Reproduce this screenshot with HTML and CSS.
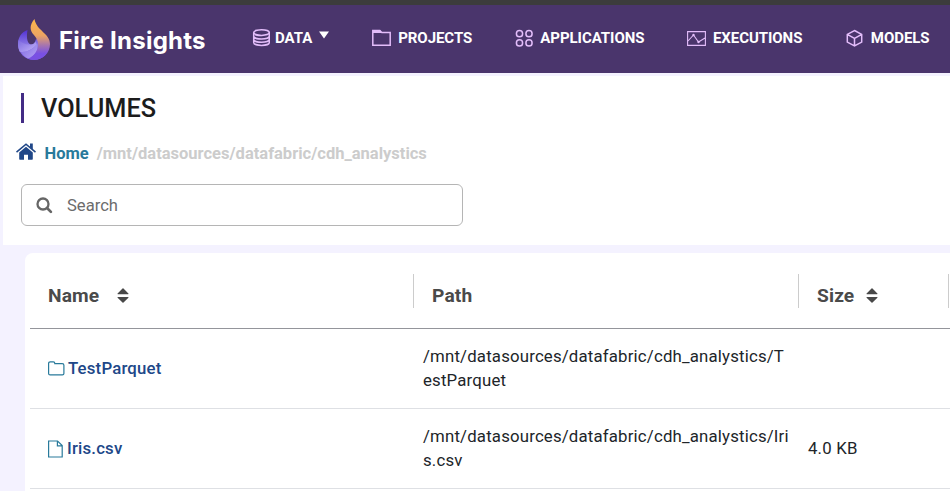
FILE: index.html
```html
<!DOCTYPE html>
<html lang="en">
<head>
<meta charset="utf-8">
<title>Fire Insights</title>
<link rel="stylesheet" href="styles.css">
</head>
<body>
<header class="topbar">
  <div class="brand">
    <svg class="brand-logo" width="34" height="43" viewBox="0 0 34 43">
      <defs>
        <linearGradient id="flame" x1="0" y1="0" x2="0" y2="1"><stop offset="0" stop-color="#fdb64a"/><stop offset=".4" stop-color="#eda462"/><stop offset=".65" stop-color="#a574b0"/><stop offset=".85" stop-color="#7950e3"/></linearGradient>
        <linearGradient id="swirl" x1="0" y1="0" x2="0" y2="1"><stop offset="0" stop-color="#5130d2"/><stop offset=".5" stop-color="#8c79e6"/><stop offset="1" stop-color="#7852e0"/></linearGradient>
        <linearGradient id="facet" x1="0" y1="0" x2="1" y2="1"><stop offset="0" stop-color="#7d69df"/><stop offset="1" stop-color="#c3b3fa"/></linearGradient>
      </defs>
      <path fill="url(#swirl)" d="M10.500 12C4 14 1 20 1 26c0 9 7 16 16 16s15-7 15-16L19 21c-1 4-3 6-5.500 5.500C9.500 24.500 9.500 18 10.500 12z"/>
      <path fill="url(#facet)" d="M1.500 22c3 3 7 5 12 4.500 2 .5 4-1 5-3l1 3c-4 5-12 9-17 7-1.500-4-1.800-8-1-11.500z"/>
      <path fill="url(#facet)" d="M4 34c7 0 13-3 16-9 2 7-2 13-9 15.500C8 39.500 6 37 4 34z" opacity=".8"/>
      <path fill="url(#flame)" d="M17.500 1c-5 6-5 11-1 15.500 3.500 4 5 7 4.500 11.500-.5 6-5 10-9 13 11 3 21-4 21-15C33 15 19.500 13 17.500 1z"/>
    </svg>
    <span class="brand-name">Fire Insights</span>
  </div>
  <nav class="nav">
    <a class="nav-item data">
      <svg width="18" height="18" viewBox="0 0 18 18"><g class="line thick"><ellipse cx="9.500" cy="3.600" rx="7.800" ry="2.800"/><path d="M1.700 3.600v9.800c0 1.700 3.500 3 7.800 3s7.800-1.300 7.800-3V3.600M1.700 7c0 1.700 3.500 3 7.800 3s7.800-1.300 7.800-3M1.700 10.300c0 1.700 3.500 3 7.800 3s7.800-1.300 7.800-3"/></g></svg>
      <span>DATA</span>
      <svg class="caret" width="10" height="8" viewBox="0 0 10 8"><path fill="#fff" d="M0 .5h10L5 7.500z"/></svg>
    </a>
    <a class="nav-item">
      <svg width="19" height="18" viewBox="0 0 19 18"><path class="line thick" d="M.8 16V1.500h7l2 2h8.400V16.200H.8z"/><path fill="#e3bdfa" d="M1 1h7l2 3H1z"/></svg>
      <span>PROJECTS</span>
    </a>
    <a class="nav-item apps">
      <svg width="18" height="18" viewBox="0 0 18 18"><g class="line thick"><circle cx="4.500" cy="4.700" r="3.100"/><circle cx="14" cy="4.700" r="3.100"/><circle cx="4.500" cy="13.900" r="3.100"/><circle cx="14" cy="13.900" r="3.100"/></g></svg>
      <span>APPLICATIONS</span>
    </a>
    <a class="nav-item exec">
      <svg width="19" height="16" viewBox="0 0 19 16"><path class="line" d="M.6 1.600h17.800v13.800H.6zM1 11l5.500-6 5 7 6.500-4"/><circle cx="6.500" cy="5" r="1.200" fill="#e3bdfa"/><circle cx="11.500" cy="12" r="1.200" fill="#e3bdfa"/></svg>
      <span>EXECUTIONS</span>
    </a>
    <a class="nav-item models">
      <svg width="17" height="18" viewBox="0 0 17 18"><path class="line thick" d="M8.500 1.500l7.200 3.900v7.700l-7.200 3.900-7.200-3.900V5.400zM1.300 5.400l7.200 4 7.200-4M8.500 9.400V17"/></svg>
      <span>MODELS</span>
    </a>
  </nav>
</header>
<main>
  <section class="intro">
    <h1 class="title">VOLUMES</h1>
    <div class="crumbs">
      <svg width="20" height="17" viewBox="0 0 20 17"><path fill="#204788" d="M10 3.800l6.800 5.700V16a.7.7 0 0 1-.7.700H12v-5H8v5H3.900a.7.700 0 0 1-.7-.7V9.500z"/><path fill="none" stroke="#204788" stroke-width="1.600" d="M.5 9.200L10 1.200l9.500 8"/><path fill="#204788" d="M14 .5h2.800v6L14 4z"/></svg>
      <a class="home">Home</a>
      <span class="crumb-path">/mnt/datasources/datafabric/cdh_analystics</span>
    </div>
    <div class="search">
      <svg width="17" height="17" viewBox="0 0 17 17"><circle cx="7" cy="7" r="5.500" fill="none" stroke="#666" stroke-width="2.300"/><path stroke="#666" stroke-width="2.700" stroke-linecap="round" d="M11.300 11.300l3.600 3.600"/></svg>
      <span>Search</span>
    </div>
  </section>
  <section class="card">
    <div class="row head">
      <div class="cell">Name <svg class="sort" width="12" height="15" viewBox="0 0 12 15"><path d="M1 6.200h10q1 0 .4-.8L6.500.5Q6 0 5.500.5L.6 5.400Q0 6.200 1 6.200zM1 9h10q1 0 .4.800l-4.900 4.700q-.5.500-1 0L.6 9.800Q0 9 1 9z"/></svg></div>
      <div class="cell divided">Path</div>
      <div class="cell divided">Size <svg class="sort size-sort" width="12" height="15" viewBox="0 0 12 15"><path d="M1 6.200h10q1 0 .4-.8L6.500.5Q6 0 5.500.5L.6 5.400Q0 6.200 1 6.200zM1 9h10q1 0 .4.800l-4.900 4.700q-.5.500-1 0L.6 9.800Q0 9 1 9z"/></svg></div>
      <div class="cell divided"></div>
    </div>
    <div class="row">
      <div class="cell file"><svg class="folder" width="17" height="15" viewBox="0 0 17 15"><path d="M.6 12.500v-10Q.6.800 2.300.8h3q1.500 0 1.500 1.500v.3h7.400q1.700 0 1.700 1.700v8.200q0 1.400-1.500 1.400H2.100Q.6 13.900.6 12.500z"/></svg><a>TestParquet</a></div>
      <div class="cell path">/mnt/datasources/datafabric/cdh_analystics/T<br>estParquet</div>
      <div class="cell value"></div>
    </div>
    <div class="row">
      <div class="cell file"><svg class="doc" width="15" height="18" viewBox="0 0 15 18"><path d="M.6 1h9l4.600 4.600V17H.6zM9.400 1v4.800h4.800"/></svg><a>Iris.csv</a></div>
      <div class="cell path">/mnt/datasources/datafabric/cdh_analystics/Iri<br>s.csv</div>
      <div class="cell value">4.0 KB</div>
    </div>
  </section>
</main>
</body>
</html>
```

FILE: styles.css
```css
* { box-sizing: border-box; }
body { margin: 0; height: 491px; overflow: hidden; background: #f4f2ff; font: 16px/24px Roboto, sans-serif; color: #212529; }
svg { display: block; flex: none; }
.topbar { height: 73px; border-top: 5px solid #3c3c3c; background: #4a356c; display: flex; align-items: flex-start; }
.brand { display: flex; width: 252px; padding: 13px 0 0 17px; flex: none; }
.brand-name { margin: 8px 0 0 8px; font: 700 24px/30px Inter, sans-serif; letter-spacing: .25px; color: #fff; white-space: nowrap; }
.nav { display: flex; gap: 43px; padding-top: 22px; }
.nav-item { display: flex; align-items: center; height: 21px; font-weight: 700; font-size: 15px; letter-spacing: -.05px; color: #fff; gap: 7px; white-space: nowrap; }
.nav-item.data { gap: 5px; }
.nav-item .caret { margin: -5px 0 0 2px; }
.nav-item.exec { gap: 6.500px; }
.nav-item.models { margin-left: 1px; gap: 7.500px; }
.line { fill: none; stroke: #e3bdfa; stroke-width: 1.1; }
.thick { stroke-width: 1.5; }
.intro { margin: 3px 0 0 3px; height: 169px; padding: 17px 0 0 18px; background: #fff; }
.title { margin: 0; height: 30px; border-left: 3px solid #432c85; padding-left: 17px; font-weight: 500; font-size: 25.3px; line-height: 32px; color: #1c1c1c; }
.crumbs { display: flex; align-items: center; height: 24px; margin: 19px 0 0 -5px; font-weight: 700; font-size: 16.5px; white-space: nowrap; }
.crumbs svg { margin-top: -5px; }
.home { margin-left: 8.500px; color: #287a9b; }
.crumb-path { margin-left: 8px; color: #ccc; }
.search { display: flex; align-items: center; width: 442px; height: 42px; margin-top: 18px; padding-left: 14px; border: 1px solid #b5b5b5; border-radius: 6px; font-size: 16.6px; color: #6c6c6c; }
.search span { margin: 2px 0 0 14px; }
.card { margin: 8px 0 0 25px; padding: 0 0 0 5px; height: 260px; border-radius: 8px 0 0 0; background: #fff; }
.row { display: grid; grid-template-columns: 383px 385px 150px 2px; height: 80px; align-items: center; border-bottom: 1px solid #dee0e4; font-size: 16.8px; letter-spacing: .18px; }
.row.head { height: 76px; border-color: #94959b; font-weight: 700; font-size: 19.2px; letter-spacing: .12px; color: #4a4a4a; }
.head .cell { display: flex; align-items: center; height: 34px; padding-left: 18px; margin-top: 1px; padding-top: 9px; }
.head .divided { border-left: 1px solid #ccc; }
.sort { margin-left: 18px; fill: #484848; }
.size-sort { margin-left: 12px; }
.file { display: flex; align-items: center; padding-left: 18px; font-weight: 500; color: #204788; }
.file svg { fill: none; stroke: #287a9b; stroke-width: 1.2; }
.file a { padding-bottom: 2px; }
.folder { margin-right: 3px; }
.doc { margin-right: 4px; }
.path { padding: 0 0 2px 10px; white-space: nowrap; }
.value { padding: 0 0 2px 10px; }
```
